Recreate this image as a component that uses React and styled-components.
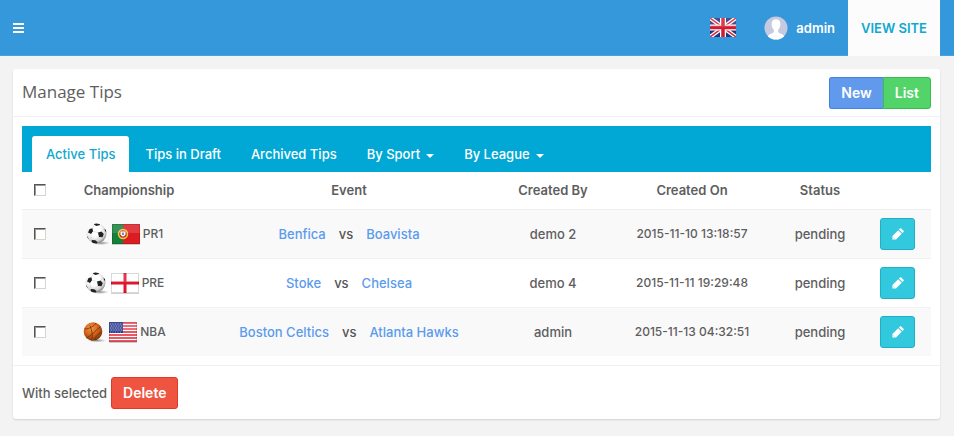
import React, { useState } from "react";
import styled, { createGlobalStyle, css } from "styled-components";

const GlobalStyle = createGlobalStyle`
  *, *::before, *::after { box-sizing: border-box; }
  body {
    margin: 0;
    background: #f3f3f3;
    color: #5e5e5e;
    font: 500 13px/20px Inter, "Open Sans", sans-serif;
  }
  a { text-decoration: none; }
  button, input { font: inherit; }
`;

const TopBar = styled.header`
  display: flex;
  align-items: stretch;
  height: 56px;
  padding-right: 14px;
  background: #3598db;
  border-bottom: 1px solid #41a3e4;
`;

const MenuButton = styled.button`
  display: flex;
  align-items: center;
  margin-right: auto;
  padding: 0 13px;
  border: 0;
  background: none;
  color: #fff;
`;

const FlagButton = styled.button`
  display: flex;
  align-items: center;
  padding: 0;
  margin-right: 28px;
  border: 0;
  background: none;
`;

const UserLink = styled.a`
  display: flex;
  align-items: center;
  gap: 8px;
  margin-right: 13px;
  color: #fff;
  font-weight: 600;
`;

const SiteLink = styled.a`
  display: flex;
  align-items: center;
  justify-content: center;
  width: 92px;
  margin-bottom: -1px;
  background: #fcfcfc;
  color: #10a8cf;
  font-weight: 600;
  font-size: 13px;
`;

const Panel = styled.main`
  margin: 13px 14px 16px 13px;
  background: #fff;
  border-radius: 3px;
  box-shadow: 0 1px 2px rgba(0, 0, 0, 0.14);
`;

const PanelHeader = styled.div`
  display: flex;
  align-items: center;
  justify-content: space-between;
  height: 48px;
  padding: 0 9px;
  border-bottom: 1px solid #f0f0f0;
`;

const Title = styled.h1`
  margin: 0 0 2px;
  color: #5e5e5e;
  font: 400 17px/24px "Open Sans", sans-serif;
`;

const ButtonGroup = styled.div`
  display: flex;
`;

const tones = {
  blue: css`background: #619aec; border-color: #3f83e0;`,
  green: css`background: #52d468; border-color: #36bf4f;`,
  red: css`background: #ee5440; border-color: #e03a25;`,
  cyan: css`background: #32c8de; border-color: #1fb0c6;`,
};

const Button = styled.button`
  display: inline-flex;
  align-items: center;
  justify-content: center;
  height: 32px;
  padding: 0 11px;
  border: 1px solid;
  border-radius: 3px;
  color: #fff;
  font-size: 14px;
  font-weight: 600;
  ${(p) => tones[p.$tone]}
  ${ButtonGroup} &:first-child { border-radius: 3px 0 0 3px; border-right: 0; }
  ${ButtonGroup} &:last-child { border-radius: 0 3px 3px 0; }
`;

const EditButton = styled(Button)`
  width: 35px;
  padding: 0;
  vertical-align: middle;
`;

const PanelBody = styled.div`
  padding: 9px;
`;

const Tabs = styled.nav`
  display: flex;
  align-items: flex-end;
  gap: 2px;
  height: 46px;
  padding: 0 10px;
  background: #02a8d5;
`;

const Tab = styled.button`
  display: flex;
  align-items: center;
  gap: 6px;
  height: 36px;
  padding: 0 14px;
  border: 0;
  border-radius: 3px 3px 0 0;
  background: ${(p) => (p.$active ? "#fff" : "transparent")};
  color: ${(p) => (p.$active ? "#10a8cf" : "#fff")};
  font-weight: 500;
`;

const Caret = styled.span`
  margin-top: 3px;
  border: 4px solid transparent;
  border-top-color: currentColor;
  border-bottom: 0;
`;

const Table = styled.table`
  width: 100%;
  table-layout: fixed;
  border-collapse: collapse;
  text-align: center;
`;

const Col = styled.col`
  width: ${(p) => p.$w || "auto"};
`;

const HeadCell = styled.th`
  height: 37px;
  padding: 0;
  border-bottom: 1px solid #eee;
  font-size: 13px;
  font-weight: 600;
`;

const Row = styled.tr`
  background: ${(p) => (p.$striped ? "#f9f9f9" : "#fff")};
`;

const Cell = styled.td`
  height: 49px;
  padding: 0;
  border-top: 1px solid #f2f2f2;
`;

const DateCell = styled(Cell)`
  font-size: 12px;
`;

const Check = styled.input`
  appearance: none;
  display: block;
  width: 12px;
  height: 12px;
  margin: 0 auto;
  border: 1px solid;
  border-color: #555 #d8d4cc #d8d4cc #555;
  background: #fff;
  box-shadow: inset 1px 1px 0 #9a9a9a;
  &:checked { background: #02a8d5; }
`;

const League = styled.div`
  display: flex;
  align-items: center;
  justify-content: center;
  gap: 2px;
  padding-right: 10px;
  font-size: 12px;
`;

const Match = styled.div`
  display: flex;
  justify-content: center;
  gap: 13px;
  color: #555;
  a { color: #5b9bee; }
`;

const PanelFooter = styled.div`
  display: flex;
  align-items: center;
  gap: 4px;
  height: 54px;
  padding: 0 9px;
  border-top: 1px solid #f0f0f0;
`;

const MenuIcon = () => (
  <svg width="11" height="10" viewBox="0 0 11 10" fill="currentColor" aria-hidden="true">
    <path d="M0 0h11v2H0zM0 4h11v2H0zM0 8h11v2H0z" />
  </svg>
);

const PencilIcon = () => (
  <svg width="12" height="12" viewBox="0 0 12 12" fill="#fff" aria-hidden="true">
    <path d="M.4 8 6.200 2.200 9.800 5.800 4 11.600H.4zM6.900 1.500 7.900.5q.7-.7 1.400 0L11.500 2.700q.7.7 0 1.400L10.500 5.100z" />
    <path d="M1.300 9.200 2.800 10.700H2.100V9.900H1.300z" fill="#32c8de" />
  </svg>
);

const Avatar = () => (
  <svg width="24" height="24" viewBox="0 0 24 24" aria-hidden="true">
    <clipPath id="avatar"><circle cx="12" cy="12" r="11.500" /></clipPath>
    <g clipPath="url(#avatar)">
      <path fill="#c5cae0" d="M0 0h24v24H0z" />
      <path fill="#fff" d="M12 3.200c-3 0-4.600 2-4.400 5 .1 2.600 1 4.300 2.200 5.500v2.300c-.8 1.600-4.700 1.800-6 4.200V24h16.400v-3.800c-1.300-2.400-5.200-2.600-6-4.200v-2.300c1.200-1.200 2.100-2.900 2.200-5.500.2-3-1.400-5-4.400-5z" />
    </g>
  </svg>
);

const UnionFlag = () => (
  <svg width="26" height="19" viewBox="0 0 26 19" role="img" aria-label="English">
    <path fill="#26347c" d="M0 0h26v19H0z" />
    <path stroke="#fff" strokeWidth="4" d="M0 0 26 19M26 0 0 19" />
    <path stroke="#d5283c" strokeWidth="1.500" d="M0 0 26 19M26 0 0 19" />
    <path stroke="#fff" strokeWidth="6" d="M13 0v19M0 9.500h26" />
    <path stroke="#d8182f" strokeWidth="3.500" d="M13 0v19M0 9.500h26" />
    <path fill="#fff" opacity=".14" d="M0 0h26v9H0z" />
  </svg>
);

const Football = () => (
  <svg width="24" height="24" viewBox="0 0 24 24" aria-hidden="true">
    <defs>
      <radialGradient id="leather" cx=".42" cy=".35" r=".65">
        <stop offset=".45" stopColor="#fff" /><stop offset=".8" stopColor="#d8d8d8" /><stop offset="1" stopColor="#888" />
      </radialGradient>
      <radialGradient id="ballshade"><stop stopColor="#555" stopOpacity=".7" /><stop offset="1" stopColor="#777" stopOpacity="0" /></radialGradient>
      <clipPath id="ball"><circle cx="11.500" cy="11.500" r="10" /></clipPath>
    </defs>
    <ellipse cx="16" cy="21" rx="9" ry="2" fill="url(#ballshade)" />
    <circle cx="11.500" cy="11.500" r="10" fill="url(#leather)" />
    <g clipPath="url(#ball)" fill="#222">
      <path d="M13 10.500 16.500 9.500 18.800 12 17.500 15.300 14 15zM4.500 7 7.500 6.200 8 9.300 6 12 3 10.500zM9.500.5l5 .5.5 2-3.500 1-2.500-1.200zM6.800 18l3.700.2 2 2-1 2.500-5-1zM19.500 6.500l2 2v2l-1.500-1.500zM1 13.500l1.800 1.500 1 2.500-2-1z" />
      <path fill="none" stroke="#ccc" strokeWidth=".5" d="m8 9.300 5 1.200M6 12l.8 6M14 15l-3.500 3.200M16.500 9.500l3-3M7.500 6.200 9 2.800" />
    </g>
  </svg>
);

const Basketball = () => (
  <svg width="24" height="24" viewBox="0 0 24 24" aria-hidden="true">
    <defs>
      <radialGradient id="rubber" cx=".4" cy=".32" r=".7">
        <stop stopColor="#f09a45" /><stop offset=".5" stopColor="#d8661b" /><stop offset="1" stopColor="#7e3309" />
      </radialGradient>
      <radialGradient id="hoopshade"><stop stopColor="#555" stopOpacity=".7" /><stop offset="1" stopColor="#777" stopOpacity="0" /></radialGradient>
    </defs>
    <ellipse cx="15" cy="20.500" rx="9" ry="2" fill="url(#hoopshade)" />
    <circle cx="11" cy="11.500" r="9.300" fill="url(#rubber)" />
    <path fill="none" stroke="#6b300e" strokeWidth=".8" d="M2.500 9C8 9 12 6 14 3M4.500 18C9 16 13 11 18.500 6.500M8 5.500C10 11 11 15 9.500 20.500M13 20.500c0-4 3-7 7-8" />
  </svg>
);

const FlagSvg = ({ label, children }) => (
  <svg width="30" height="24" viewBox="0 0 30 24" role="img" aria-label={label}>
    <path fill="#000" opacity=".18" d="M1 2h28v21H1z" />
    {children}
    <path fill="#fff" opacity=".14" d="M1 2h28v9H1z" />
    <path fill="none" stroke="#000" strokeOpacity=".15" d="M1.500 2.500h27v19h-27z" />
  </svg>
);

const Portugal = () => (
  <FlagSvg label="Portugal">
    <path fill="#dc1c23" d="M1 2h28v20H1z" />
    <path fill="#16803a" d="M1 2h11v20H1z" />
    <circle cx="12" cy="12" r="4.500" fill="#d12c2c" stroke="#e8cf3a" strokeWidth="1.500" />
    <path fill="#fff" d="M9.500 9.500h5v3q-2.500 4-5 0z" />
    <path fill="#6f8fc4" d="M11 10.500h2v2.500h-2z" />
  </FlagSvg>
);

const England = () => (
  <FlagSvg label="England">
    <path fill="#fff" d="M1 2h28v20H1z" />
    <path stroke="#de1630" strokeWidth="3" d="M15 2v20M1 12h28" />
  </FlagSvg>
);

const USA = () => (
  <FlagSvg label="United States">
    <path fill="#fff" d="M1 2h28v20H1z" />
    <path stroke="#e02233" strokeWidth="1.600" d="M1 3h28M1 6h28M1 9h28M1 12h28M1 15h28M1 18h28M1 21h28" />
    <path fill="#2c3c91" d="M1 2h14v11H1z" />
    <path stroke="#8f9bcd" strokeWidth="1" strokeDasharray="1 1.500" d="M2 4h12M3 6h11M2 8h12M3 10h11M2 12h12" />
  </FlagSvg>
);

const tabs = [
  { label: "Active Tips" },
  { label: "Tips in Draft" },
  { label: "Archived Tips" },
  { label: "By Sport", menu: true },
  { label: "By League", menu: true },
];

const tips = [
  { Sport: Football, Flag: Portugal, league: "PR1", home: "Benfica", away: "Boavista", by: "demo 2", on: "2015-11-10 13:18:57" },
  { Sport: Football, Flag: England, league: "PRE", home: "Stoke", away: "Chelsea", by: "demo 4", on: "2015-11-11 19:29:48" },
  { Sport: Basketball, Flag: USA, league: "NBA", home: "Boston Celtics", away: "Atlanta Hawks", by: "admin", on: "2015-11-13 04:32:51" },
];

const headings = ["Championship", "Event", "Created By", "Created On", "Status"];

export default function App() {
  const [active, setActive] = useState(0);
  return (
    <>
      <GlobalStyle />
      <TopBar>
        <MenuButton aria-label="Toggle menu"><MenuIcon /></MenuButton>
        <FlagButton><UnionFlag /></FlagButton>
        <UserLink href="#profile"><Avatar />admin</UserLink>
        <SiteLink href="#site">VIEW SITE</SiteLink>
      </TopBar>
      <Panel>
        <PanelHeader>
          <Title>Manage Tips</Title>
          <ButtonGroup>
            <Button $tone="blue">New</Button>
            <Button $tone="green">List</Button>
          </ButtonGroup>
        </PanelHeader>
        <PanelBody>
          <Tabs>
            {tabs.map((t, i) => (
              <Tab key={t.label} $active={i === active} onClick={() => setActive(i)}>
                {t.label}
                {t.menu && <Caret />}
              </Tab>
            ))}
          </Tabs>
          <Table>
            <colgroup>
              <Col $w="36px" /><Col $w="142px" /><Col /><Col $w="110px" />
              <Col $w="168px" /><Col $w="88px" /><Col $w="67px" />
            </colgroup>
            <thead>
              <tr>
                <HeadCell><Check type="checkbox" aria-label="Select all" /></HeadCell>
                {headings.map((h) => <HeadCell key={h}>{h}</HeadCell>)}
                <HeadCell />
              </tr>
            </thead>
            <tbody>
              {tips.map(({ Sport, Flag, ...tip }, i) => (
                <Row key={tip.league} $striped={i % 2 === 0}>
                  <Cell><Check type="checkbox" aria-label={`Select ${tip.home} vs ${tip.away}`} /></Cell>
                  <Cell><League><Sport /><Flag />{tip.league}</League></Cell>
                  <Cell>
                    <Match><a href="#home">{tip.home}</a><span>vs</span><a href="#away">{tip.away}</a></Match>
                  </Cell>
                  <Cell>{tip.by}</Cell>
                  <DateCell>{tip.on}</DateCell>
                  <Cell>pending</Cell>
                  <Cell><EditButton $tone="cyan" aria-label="Edit"><PencilIcon /></EditButton></Cell>
                </Row>
              ))}
            </tbody>
          </Table>
        </PanelBody>
        <PanelFooter>
          <span>With selected</span>
          <Button $tone="red">Delete</Button>
        </PanelFooter>
      </Panel>
    </>
  );
}
